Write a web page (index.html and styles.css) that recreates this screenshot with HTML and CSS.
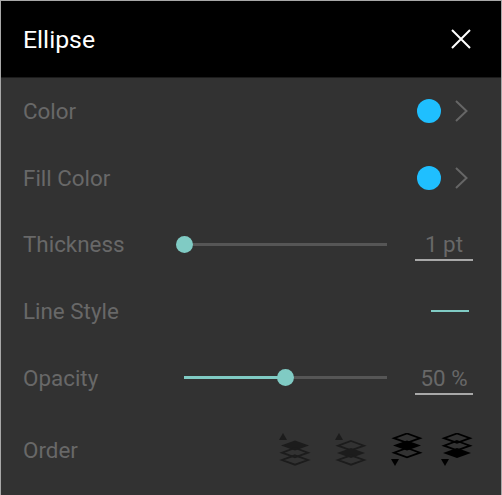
FILE: index.html
```html
<!DOCTYPE html>
<html lang="en">
<head>
    <meta charset="UTF-8">
    <title>Ellipse</title>
    <link rel="stylesheet" href="styles.css">
</head>
<body>
    <div class="panel">
        <div class="header">
            <span class="title">Ellipse</span>
            <svg class="close" width="20" height="20" viewBox="0 0 20 20"><path d="M1 1L19 19M19 1L1 19" stroke="#fff" stroke-width="2" fill="none"/></svg>
        </div>

        <div class="row">
            <span class="label">Color</span>
            <span class="swatch"></span>
            <svg class="chevron" width="14" height="22" viewBox="0 0 14 22"><path d="M2 1L12.5 11L2 21" stroke="#666" stroke-width="2" fill="none"/></svg>
        </div>

        <div class="row">
            <span class="label">Fill Color</span>
            <span class="swatch"></span>
            <svg class="chevron" width="14" height="22" viewBox="0 0 14 22"><path d="M2 1L12.5 11L2 21" stroke="#666" stroke-width="2" fill="none"/></svg>
        </div>

        <div class="row">
            <span class="label">Thickness</span>
            <div class="slider">
                <div class="knob" style="left: 0%"></div>
            </div>
            <span class="value">1 pt</span>
        </div>

        <div class="row">
            <span class="label">Line Style</span>
            <span class="line-sample"></span>
        </div>

        <div class="row">
            <span class="label">Opacity</span>
            <div class="slider">
                <div class="fill" style="width: 50%"></div>
                <div class="knob" style="left: 50%"></div>
            </div>
            <span class="value">50 %</span>
        </div>

        <div class="row row-order">
            <span class="label">Order</span>
            <div class="order-icons">
                <svg class="order dim" width="32" height="34" viewBox="0 0 32 34">
                    <path class="tri" d="M0 7L4 0L8 7Z"/>
                    <path class="solid" d="M16 7.5L30 12.5L16 17.5L2 12.5Z"/>
                    <path class="open" d="M16 15L29 19.7L16 24.4L3 19.7Z"/>
                    <path class="open" d="M16 22.3L29 27L16 31.7L3 27Z"/>
                </svg>
                <svg class="order dim" width="32" height="34" viewBox="0 0 32 34">
                    <path class="tri" d="M0 7L4 0L8 7Z"/>
                    <path class="open" d="M16 8L29 12.7L16 17.4L3 12.7Z"/>
                    <path class="solid" d="M16 15L30 20L16 25L2 20Z"/>
                    <path class="open" d="M16 22.3L29 27L16 31.7L3 27Z"/>
                </svg>
                <svg class="order" width="32" height="34" viewBox="0 0 32 34">
                    <path class="open" d="M16 0.5L29 5.2L16 9.9L3 5.2Z"/>
                    <path class="solid" d="M16 7.5L30 12.5L16 17.5L2 12.5Z"/>
                    <path class="open" d="M16 15L29 19.7L16 24.4L3 19.7Z"/>
                    <path class="tri" d="M0 26L4 33L8 26Z"/>
                </svg>
                <svg class="order" width="32" height="34" viewBox="0 0 32 34">
                    <path class="open" d="M16 0.5L29 5.2L16 9.9L3 5.2Z"/>
                    <path class="open" d="M16 8L29 12.7L16 17.4L3 12.7Z"/>
                    <path class="solid" d="M16 15L30 20L16 25L2 20Z"/>
                    <path class="tri" d="M0 26L4 33L8 26Z"/>
                </svg>
            </div>
        </div>
    </div>
</body>
</html>
```

FILE: styles.css
```css
* {
    box-sizing: border-box;
}

body {
    margin: 0;
    font-family: Roboto, Arial, sans-serif;
    background: #a8a8a8;
}

.panel {
    width: 502px;
    height: 495px;
    padding: 1px 1px 0;
    display: flex;
    flex-direction: column;
}

.header {
    height: 77px;
    padding: 0 30px 0 22px;
    background: #000;
    border-bottom: 1px solid #1c1c1c;
    display: flex;
    align-items: center;
    justify-content: space-between;
    flex: none;
}

.title {
    font-size: 24.8px;
    color: #fff;
}

.row {
    height: 66.6px;
    padding: 0 28px 0 22px;
    background: #323232;
    display: flex;
    align-items: center;
    flex: none;
}

.row-order {
    flex: 1;
    padding-bottom: 5px;
}

.label {
    width: 161px;
    font-size: 22.4px;
    color: #686868;
    flex: none;
}

.swatch {
    width: 24px;
    height: 24px;
    margin-left: auto;
    border-radius: 50%;
    background: #1fbfff;
}

.chevron {
    margin: 0 5px 0 13px;
}

.slider {
    position: relative;
    width: 203px;
    height: 3px;
    background: #565656;
}

.fill {
    height: 3px;
    background: #80cbc4;
}

.knob {
    position: absolute;
    top: 50%;
    width: 17px;
    height: 17px;
    margin: -8.5px 0 0 -8.5px;
    border-radius: 50%;
    background: #80cbc4;
}

.value {
    width: 58px;
    height: 34px;
    margin-left: auto;
    border-bottom: 2px solid #a8a8a8;
    font-size: 22.4px;
    line-height: 35px;
    text-align: center;
    color: #686868;
}

.line-sample {
    width: 38px;
    height: 2px;
    margin-left: auto;
    margin-right: 4px;
    background: #80cbc4;
}

.order-icons {
    margin-left: auto;
    display: flex;
    gap: 24px;
}

.order:last-child {
    margin-left: -6px;
}

.order .tri,
.order .solid {
    fill: #000;
}

.order .open {
    fill: none;
    stroke: #000;
    stroke-width: 1.8;
}

.order.dim .tri,
.order.dim .solid {
    fill: #1c1c1c;
}

.order.dim .open {
    stroke: #1c1c1c;
}
```
